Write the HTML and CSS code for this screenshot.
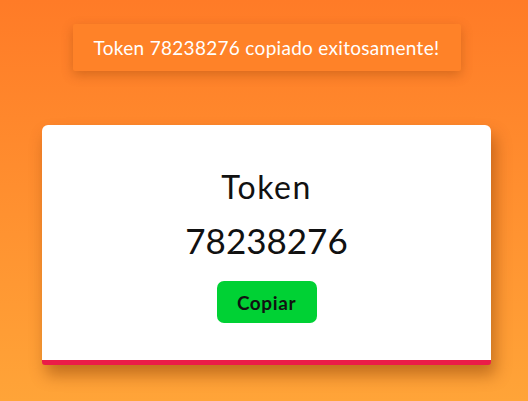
FILE: index.html
```html
<!DOCTYPE html>
<html lang="es">
<head>
<meta charset="utf-8">
<link rel="stylesheet" href="styles.css">
</head>
<body>
<div class="page">
  <div class="toast">Token 78238276 copiado exitosamente!</div>
  <div class="card">
    <h1 class="title">Token</h1>
    <div class="token">78238276</div>
    <button class="copy">Copiar</button>
  </div>
</div>
</body>
</html>
```
FILE: styles.css
```css
html, body {
  margin: 0;
  height: 100%;
}
body {
  background: linear-gradient(to bottom, #ff7b27, #ffa438);
  font-family: "Lato", "Noto Sans", sans-serif;
}
.page {
  display: flex;
  flex-direction: column;
  align-items: center;
  padding-top: 24px;
  padding-left: 5px;
}
.toast {
  width: 388px;
  height: 47px;
  box-sizing: border-box;
  background: #ff8228;
  color: #fff;
  font-size: 19px;
  letter-spacing: 0.3px;
  display: flex;
  align-items: center;
  justify-content: center;
  box-shadow: 0 4px 12px rgba(120, 50, 0, 0.3);
  border-radius: 2px;
}
.card {
  margin-top: 54px;
  width: 449px;
  height: 240px;
  box-sizing: border-box;
  background: #fff;
  border-radius: 6px 6px 3px 3px;
  border-bottom: 5px solid #eb1c48;
  box-shadow: 4px 10px 16px rgba(120, 50, 0, 0.45);
  display: flex;
  flex-direction: column;
  align-items: center;
  padding-top: 42px;
}
.title {
  margin: 0;
  font-size: 32px;
  font-weight: 400;
  line-height: 40px;
  letter-spacing: 1.5px;
  color: #111;
}
.token {
  margin-top: 13px;
  font-size: 35px;
  line-height: 40px;
  color: #111;
}
.copy {
  margin-top: 21px;
  width: 100px;
  height: 42px;
  border: 0;
  border-radius: 7px;
  background: #00d134;
  color: #111;
  font-family: inherit;
  font-size: 19px;
  font-weight: 700;
  letter-spacing: 0.6px;
  padding: 0;
}
```
